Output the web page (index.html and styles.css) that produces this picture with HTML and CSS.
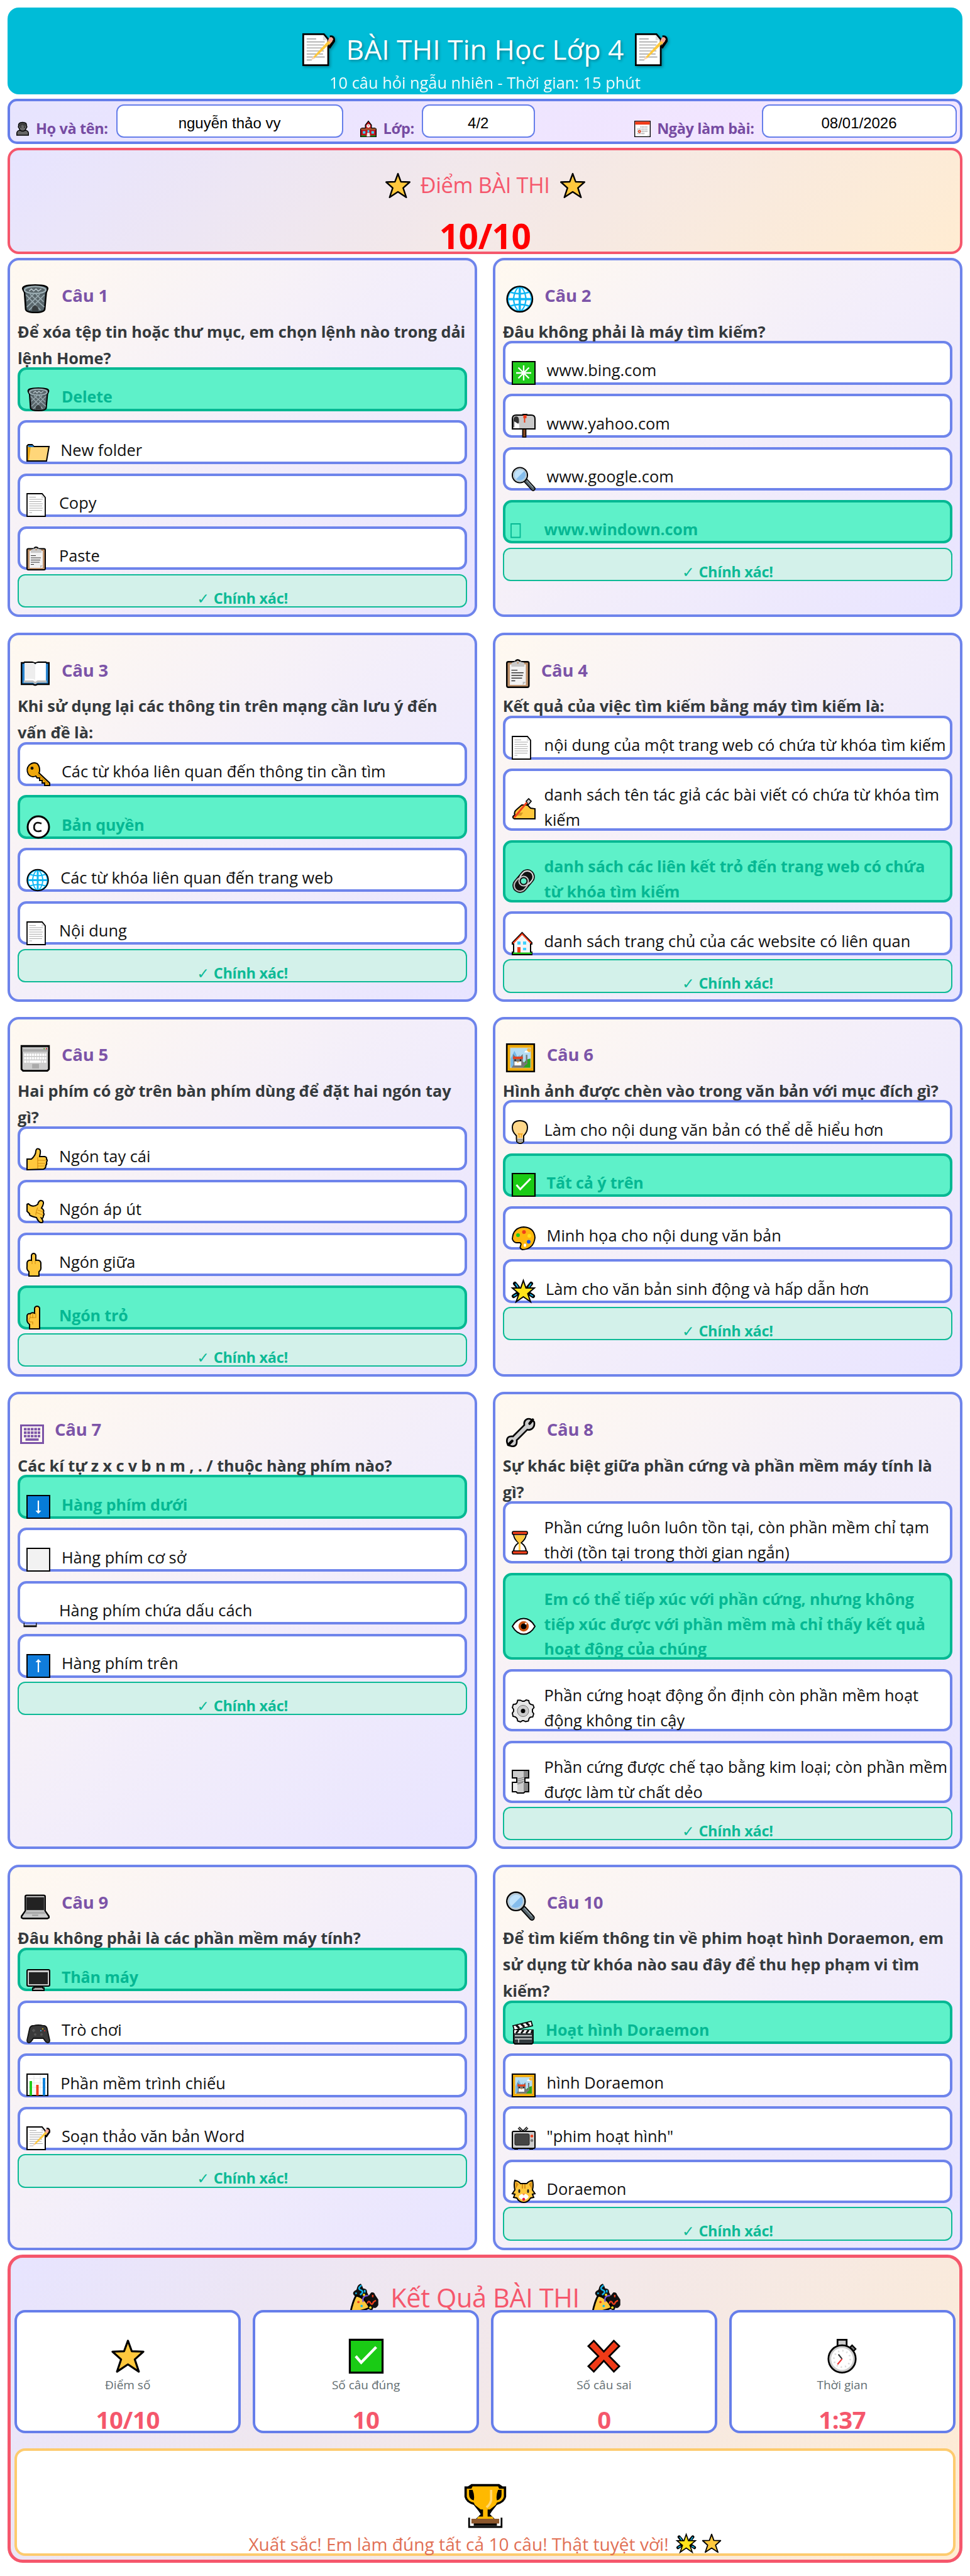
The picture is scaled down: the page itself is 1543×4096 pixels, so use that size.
FILE: index.html
```html
<!DOCTYPE html>
<html lang="vi">
<head>
<meta charset="utf-8">
<title>BÀI THI Tin Học Lớp 4</title>
<link rel="stylesheet" href="styles.css">
</head>
<body>
<svg class="defs" aria-hidden="true">
<symbol id="memo" viewBox="0 0 38 38"><path d="M1 1h24l5 6v30H1z" fill="#fff" stroke="#000" stroke-width="2"/><path d="M24 2v6h5z" fill="#ddd"/><path d="M5 6.500h11M5 10h21M5 13.500h20M5 17h21M5 20.500h20M5 24h19M5 27.500h21M5 31h6" stroke="#aaa" stroke-width="1.200"/><path d="M32 4q5-1 4.500 5L31 17" fill="#f3a694" stroke="#000" stroke-width="3"/><path d="M32 6.500 13 27l-3 4 5-3L35 9z" fill="#ffc83d"/><path d="M31.500 5q3-2 4.500 2l-2.500 4-4-2.500z" fill="#f3a694"/><path d="m10 31 2-4 3 2z" fill="#f6d6bd"/></symbol>
<symbol id="person" viewBox="0 0 38 38"><path d="M3 37V31q1-7 8-7h16q7 0 8 7v6z" fill="#666" stroke="#000" stroke-width="2.500"/><path d="M19 1.500C10 1.500 7 6 8 12q-2 3 1 5 2 9 10 9t10-9q3-2 1-5 1-10.500-11-10.500z" fill="#666" stroke="#000" stroke-width="2.500"/><path d="M9 13q2-11 11-11 9 1 10 10-9 0-12-4-3 5-9 5z" fill="#3b3b3b"/><path d="M14 13.500v3M24 13.500v3" stroke="#000" stroke-width="2"/></symbol>
<symbol id="school" viewBox="0 0 38 38"><path d="M1 37V19l3-2h8V10l7-9 7 9v7h8l3 2v18z" fill="#c3141c" stroke="#000" stroke-width="2"/><path d="M2 18h34v3H2z" fill="#986536"/><circle cx="19" cy="12" r="4" fill="#fff"/><path d="M19 10v3" stroke="#000"/><path d="M6 24h6v6H6zM26 24h6v6h-6zM17 22h4v5h-4z" fill="#3fd3ff"/><path d="M16 28h6l1 9h-8z" fill="#eee"/><path d="M2 34h12v3H2zM24 34h12v3H24z" fill="#128b16"/></symbol>
<symbol id="cal" viewBox="0 0 38 38"><path d="M1 1h36v36H1z" fill="#fff" stroke="#000" stroke-width="2"/><path d="M2 2h34v7H2z" fill="#f03a17"/><path d="M14 14.500h17M7 19.500h24M7 24.500h24M7 29.500h17" stroke="#bbb" stroke-width="3.500" stroke-dasharray="2.500 1"/><circle cx="12" cy="25" r="2.500" fill="none" stroke="#f03a17" stroke-width="2"/><path d="M31 36v-4h5z" fill="#ddd"/></symbol>
<symbol id="star" viewBox="0 0 38 38"><path d="m19 2 4.200 11.500L36 14 26.500 22.500 31 36l-12-8-12 8 4.500-13.500L2 14l12.800-.5z" fill="#ffc83d" stroke="#000" stroke-width="2.200" stroke-linejoin="round"/></symbol>
<symbol id="trash" viewBox="0 0 38 38"><path d="M3 7q-3-6 16-6t16 6l-1.500 4-2 22q-1 4-12.500 4T6.500 33L5 11z" fill="#47565c" stroke="#000" stroke-width="2"/><path d="M6 12q12 4 26 0l-2 21q-10 4-21 0z" fill="#59666b"/><path d="m7 14 19 20M12 13l19 17M20 13l10 10M31 14 11 34M25 13 8 30M17 13 8 22" stroke="#9aaab0" stroke-width="1.400"/><ellipse cx="19" cy="7.500" rx="14" ry="4.700" fill="#59666b" stroke="#9fb1b7" stroke-width="2"/><path d="m11 9 3-3 3 3 3-3 3 3 4-3" stroke="#b5c4ca" fill="none" stroke-width="1.300"/><path d="M15 30q4-5 8 0v5h-8z" fill="#222" opacity=".6"/></symbol>
<symbol id="folder" viewBox="0 0 38 38"><path d="M1 33V9l2-2h6l3 3h24l-4 23z" fill="#ffd679" stroke="#000" stroke-width="2"/><path d="M2 32V10h5L4 32z" fill="#e9a512"/><path d="M3 8h7l2 3H3z" fill="#1f75c4"/></symbol>
<symbol id="page" viewBox="0 0 38 38"><path d="M1 1h24l5 6v30H1z" fill="#fff" stroke="#000" stroke-width="1.800"/><path d="M24 2v6h5z" fill="#ddd"/><path d="M4.500 6.500H15M4.500 10H26M4.500 13.500H24M4.500 17H26M4.500 20.500H25M4.500 24H26M4.500 27.500H25M4.500 31H9" stroke="#aaa" stroke-width="1.200"/></symbol>
<symbol id="clip" viewBox="0 0 38 38"><rect x="1" y="3.500" width="29" height="33.500" rx="2" fill="#bd9069" stroke="#000" stroke-width="2"/><path d="M5 7h21v27H5z" fill="#f2f2f2"/><path d="M7 10V6q1-2 4-2 1-3 4.500-3T20 4q4 0 4 2v4z" fill="#c9c9c9"/><path d="M12 3q3-4 7 0" fill="none" stroke="#000" stroke-width="2"/><circle cx="15.500" cy="5" r="1.200" fill="#bd9069"/><path d="M7 14.500h8M7 18h16M7 21.500h15M7 25h14M7 28.500h5" stroke="#333" stroke-width="1.100"/><path d="M22 34v-4h4z" fill="#bbb"/></symbol>
<symbol id="globe" viewBox="0 0 38 38"><circle cx="18" cy="19.500" r="16.700" fill="#12b8f5" stroke="#000" stroke-width="2"/><path d="M3.500 18Q5 8 14 5q-4 5-5 13zM3.500 21h5.500q1 8 5 13-9-3-10.500-13zM32.500 18Q31 8 22 5q4 5 5 13zM32.500 21H27q-1 8-5 13 9-3 10.500-13zM11 18Q12 9 16.500 5v13zM25 18q-1-9-5.500-13v13zM11 21q1 9 5.500 13V21zM25 21q-1 9-5.500 13V21z" fill="#fff"/><path d="M6 10.500q12 4 24 0M6 28.500q12-4 24 0" stroke="#12b8f5" stroke-width="2.200" fill="none"/></symbol>
<symbol id="aster" viewBox="0 0 38 38"><path d="M1 1h36v36H1z" fill="#22cb1c" stroke="#000" stroke-width="2"/><path d="M19 7v24M7 19h24M10.500 10.500l17 17M27.500 10.500l-17 17" stroke="#fff" stroke-width="2.300"/></symbol>
<symbol id="mail" viewBox="0 0 38 38"><path d="M17.500 22h5v15h-5z" fill="#8a4b22" stroke="#000" stroke-width="1.700"/><path d="M1 24V8q0-6 6-6h24q6 0 6 6v16z" fill="#c9c9c9" stroke="#000" stroke-width="2"/><path d="M2.500 22V9q1-5 5-5t4 7v3z" fill="#333"/><path d="m4 12 8 5v6H4z" fill="#fff"/><path d="M17 1h8" stroke="#000" stroke-width="2"/><path d="M18.500 2h5v5h-2v7h-2V7h-1z" fill="#f03a17"/></symbol>
<symbol id="mag" viewBox="0 0 38 38"><path d="m23 23 11 12" stroke="#000" stroke-width="7.500" stroke-linecap="round"/><path d="m23 23 11 12" stroke="#546269" stroke-width="4.500" stroke-linecap="round"/><path d="m24 22 10 11" stroke="#93a3aa" stroke-width="1.300"/><circle cx="13" cy="13.500" r="12" fill="#a9d3f5" stroke="#000" stroke-width="2"/><circle cx="13" cy="13.500" r="10" fill="#a9d3f5" stroke="#bcc6ca" stroke-width="1.800"/><path d="M20 7 7 20q-4-5-1-11 6-7 14-2z" fill="#c1e3fb"/><path d="M20 7q4 6 0 11-6 6-13 2z" fill="#85bdec"/></symbol>
<symbol id="tofu" viewBox="0 0 38 38"><path d="M-1 6h14.500v21.500H-1z" fill="none" stroke="#05b893" stroke-width="1.800"/></symbol>
<symbol id="book" viewBox="0 0 38 38"><path d="M1 5h3l1-1h10l4 1.500L23 4h10l1 1h3v28H22q-3 2-6 0H1z" fill="#2a86d1" stroke="#000" stroke-width="2"/><path d="M5 5h10q3 0 4 2 1-2 4-2h10v25H22l-3 2-3-2H5z" fill="#fff"/><path d="M5 5h9q5 0 5 4v19q-1-2-5-2H5z" fill="#eee"/><path d="M4 28h12l3 2 3-2h12v3H22l-3 2-3-2H4z" fill="#bbb"/></symbol>
<symbol id="key" viewBox="0 0 38 38"><path d="M21 12q0 4-1 5l17 16v4h-8v-4h-4v-4h-4v-4h-4l-2-3q-7 3-12-3-4-8 1-14 6-6 13-3 4 4 4 10z" fill="#efa80d" stroke="#000" stroke-width="1.900"/><circle cx="9" cy="9.500" r="2.400" fill="#111"/><path d="m18 19 17 16" stroke="#c28100" stroke-width="1.300"/></symbol>
<symbol id="copyr" viewBox="0 0 38 38"><circle cx="19" cy="19" r="17" fill="#fff" stroke="#000" stroke-width="3"/><path d="M24 13.500q-9-4-11.500 3-1.500 7 3.500 9 4 1 8-.8" fill="none" stroke="#111" stroke-width="2.800"/></symbol>
<symbol id="write" viewBox="0 0 38 38"><path d="m8 18 8-7h9l5 5 7 1v16H4q-5-3 1-6-2-5 3-9z" fill="#ffc83d" stroke="#000" stroke-width="2"/><path d="M8 23h10l-3 5H8z" fill="#d89a22"/><path d="m23 5 4-4 4 4-5 6z" fill="#ccc" stroke="#000" stroke-width="1.700"/><path d="M24 7 4 31" stroke="#f0401c" stroke-width="3"/></symbol>
<symbol id="link" viewBox="0 0 38 38"><g transform="rotate(40 19 19)"><rect x="7" y="-2" width="24" height="42" rx="12" fill="#111"/><rect x="9.700" y=".7" width="18.600" height="23" rx="9.300" fill="none" stroke="#ddd" stroke-width="2.200"/><rect x="9.700" y="14.300" width="18.600" height="23" rx="9.300" fill="none" stroke="#bbb" stroke-width="2.200"/><circle cx="19" cy="19" r="7.500" fill="#111" stroke="#ccc" stroke-width="2"/><circle cx="19" cy="19" r="4.500" fill="#5ef1c9"/></g></symbol>
<symbol id="house" viewBox="0 0 38 38"><path d="M1 18 16.500 2 32 18v2h-2v13h2v4H1v-4h2V20H1z" fill="#f4f4f4" stroke="#000" stroke-width="2"/><path d="M2 19 16.500 4 31 19" stroke="#f03a17" stroke-width="2.200" fill="none"/><path d="M9 16h5v5H9zM18 16h5v5h-5zM18 26h5v4h-5z" fill="#3fd3ff"/><path d="M9 25h5v10H9z" fill="#f03a17"/><path d="M2 33.500h30V36H2z" fill="#20c31a"/></symbol>
<symbol id="kbd" viewBox="0 0 38 38"><path d="M1 3.500h36V34l-2 2H3l-2-2z" fill="#ccc" stroke="#000" stroke-width="2.400"/><path d="M2 5h34v6H2z" fill="#aaa"/><path d="M3 7h32" stroke="#ddd"/><path d="M4.500 15h29M4.500 19.500h29" stroke="#fff" stroke-width="3" stroke-dasharray="2.600 .8"/><path d="M4.500 24h3m1 0h2m1 0h15m1 0h2m1 0h3" stroke="#fff" stroke-width="3"/><path d="M15 27h9v6h-9z" fill="#aaa"/><path d="M33 7h1.500" stroke="#d22" stroke-width="1.500"/><path d="M30 7h1.500" stroke="#5a2" stroke-width="1.500"/></symbol>
<symbol id="thumb" viewBox="0 0 38 38"><path d="M1 37V20h7q7-6 7-13 1-5 5-3 3 1 2 7l-1 5h8q4 1 3 4 2 2 0 5 1 3-1 5 0 5-4 6z" fill="#ffc83d" stroke="#000" stroke-width="2"/><path d="M18 17v18M18 22h13M18 27h12M18 31h11" stroke="#d48e10" stroke-width="1.200"/></symbol>
<symbol id="callme" viewBox="0 0 38 38"><path d="m1 8 2-1q7 7 15 1 2-7 6-6 5 1 2 8l-2 4q5 3 3 7 2 3 0 5 0 5-3 4 5 7-1 7-4-1-7-8Q3 26 5 23l-4-4z" fill="#ffc83d" stroke="#000" stroke-width="2"/><path d="M18 13q-3 7-3 12M18 17l9 3M16 21l10 4" stroke="#d48e10" stroke-width="1.200" fill="none"/></symbol>
<symbol id="middle" viewBox="0 0 38 38"><path d="M4 37v-7q-4-3-3-8v-6q1-5 7-4V4q1-3 3.500-3T15 4v8q7-1 8 4v6q1 5-3 8v7z" fill="#ffc83d" stroke="#000" stroke-width="2"/><path d="M9 13v5M14 13v5" stroke="#d48e10"/></symbol>
<symbol id="point" viewBox="0 0 38 38"><path d="M5 37v-7q-5-4-4-9v-5q1-4 5-3 3-3 7-1V4q1-3 4-3t4 3v33z" fill="#ffc83d" stroke="#000" stroke-width="2"/><path d="M6 14v6M10 13v7M15 12v7H6q-4 4 0 7h4v4" fill="none" stroke="#d48e10" stroke-width="1.200"/></symbol>
<symbol id="frame" viewBox="0 0 38 38"><path d="M1 1h36v36H1z" fill="#ffb900" stroke="#000" stroke-width="2.200"/><path d="M4 4h30v30H4z" fill="#f3b62b" stroke="#e29b08"/><path d="M5.500 6h27v26h-27z" fill="#b4dcf3"/><path d="m6 20 5-10 4 8 3-3v16H6z" fill="#75b8e8"/><path d="M22 32q1-11 10-12v12z" fill="#2ca51e"/><circle cx="30" cy="9" r="2.500" fill="#f6b73c"/><path d="M24 12q2-5 5-1l2 1z" fill="#fff"/><path d="m9 14 4 4h5l4-4v10l4 2V15h2v12q-3 1-5 5H7l3-4z" fill="#777"/><path d="M9 17.500h13v3H9z" fill="#e6411d"/><path d="M11 24h9v5h-9z" fill="#fff"/><circle cx="12" cy="22" r="1" fill="#111"/><circle cx="19" cy="22" r="1" fill="#111"/><path d="M14 24h3l-1.500 2z" fill="#f9c15a"/></symbol>
<symbol id="bulb" viewBox="0 0 38 38"><path d="M7.500 30V25Q1 19 1 12 1 1 13 1t12 11q0 7-6 13v9q-2 3-5.500 3T8 34z" fill="#ffd88a" stroke="#000" stroke-width="1.900"/><path d="M12 28q0-5-2-7 4 3 3 0 1 3 4 0-2 3-2 7" fill="none" stroke="#f6a51b" stroke-width="1.500"/><path d="M9 29h9v6H9z" fill="#ccc"/><path d="M9 31h9M9 33.500h9" stroke="#666"/></symbol>
<symbol id="check" viewBox="0 0 38 38"><path d="M1 1h36v36H1z" fill="#1acb15" stroke="#000" stroke-width="2.200"/><path d="m7.500 19 6 7L30 9" fill="none" stroke="#fff" stroke-width="3"/></symbol>
<symbol id="palette" viewBox="0 0 38 38"><path d="M19 1Q2 2 1 20q2 6 7 6h5q3 1 1 5-2 4 3 6Q35 36 37 18 36 2 19 1z" fill="#ffb70f" stroke="#000" stroke-width="1.900"/><circle cx="10" cy="14" r="3" fill="#22cb1c"/><circle cx="19.500" cy="9" r="3" fill="#f0401c"/><circle cx="28" cy="15" r="3" fill="#ffe11b"/><circle cx="27" cy="24.500" r="3" fill="#1354ef"/><ellipse cx="21" cy="30" rx="2" ry="2.700" fill="#fff"/></symbol>
<symbol id="glow" viewBox="0 0 38 38"><path d="m5 7 5 6M31 7l-5 6M3 27l6-4M34 27l-6-4" stroke="#000" stroke-width="6" stroke-linecap="round"/><path d="m18.500 2 4.200 12H36l-10.500 9L30 36l-11.500-8L7 36l4.500-13L1 14h13.300z" fill="#ffe31a" stroke="#000" stroke-width="2"/><path d="m6 7 4 6M31 7l-4 6M3 27l5-3M34 27l-5-3" stroke="#15b5e9" stroke-width="2"/></symbol>
<symbol id="kglyph" viewBox="0 0 38 31"><path d="M1.500 1.500h35v28h-35z" fill="none" stroke="#7c54a8" stroke-width="3"/><path d="M6 7.500h26M6 13h26M6 18.500h26" stroke="#7c54a8" stroke-width="4.200" stroke-dasharray="4.300 1.200"/><path d="M8.500 24h21" stroke="#7c54a8" stroke-width="3.700"/></symbol>
<symbol id="down" viewBox="0 0 38 38"><path d="M1 1h36v36H1z" fill="#067cd8" stroke="#000" stroke-width="2"/><path d="M19 9v16" stroke="#fff" stroke-width="2.200"/><path d="M14.500 25h9L19 30z" fill="#fff"/></symbol>
<symbol id="up" viewBox="0 0 38 38"><path d="M1 1h36v36H1z" fill="#107cdb" stroke="#000" stroke-width="2"/><path d="M19 12v17" stroke="#fff" stroke-width="2.200"/><path d="M14.500 13h9L19 8z" fill="#fff"/></symbol>
<symbol id="square" viewBox="0 0 38 38"><path d="M1 1h36v36H1z" fill="#f2f2f2" stroke="#000" stroke-width="1.900"/></symbol>
<symbol id="space" viewBox="0 0 38 38"><path d="M-3.700 34.500v6h19.400v-6" fill="none" stroke="#111" stroke-width="1.400"/><path d="M-4.300 39.500h20.600" stroke="#111" stroke-width="2.400"/></symbol>
<symbol id="wrench" viewBox="0 0 38 38"><path d="M37 5q1 6-3 9-3 2-6 1L14 29q1 8-6 8-7-1-7-7 0-7 8-6L24 9q-1-6 4-8 5-1 9 4z" fill="#ccc" stroke="#000" stroke-width="2.200"/><path d="m35 2-4 5M3 35l5-5" stroke="#000" stroke-width="3.500" stroke-linecap="round"/></symbol>
<symbol id="hour" viewBox="0 0 38 38"><path d="M3 5q0 8 8 14-8 6-8 14h20q0-8-8-14 8-6 8-14z" fill="#fff" stroke="#000" stroke-width="2"/><path d="M5 7h16q0 6-7 12v14h-3V19q-6-6-6-12z" fill="#ffc83d"/><rect x="1" y="1" width="24" height="5" rx="2" fill="#f0401c" stroke="#000" stroke-width="1.700"/><rect x="1" y="32" width="24" height="5" rx="2" fill="#f0401c" stroke="#000" stroke-width="1.700"/></symbol>
<symbol id="eye" viewBox="0 0 38 38"><path d="M1 19Q8 6.500 19 6.500T37 19Q30 31.500 19 31.500T1 19z" fill="#fff" stroke="#000" stroke-width="2"/><circle cx="19" cy="19" r="8.200" fill="#c7530f"/><circle cx="19" cy="19" r="4.500" fill="#000"/><circle cx="22.500" cy="14.500" r="1.600" fill="#fff"/></symbol>
<symbol id="gear" viewBox="0 0 38 38"><path d="M14 2.500 17 4h3l3-2 4 1 1 4 2 2 4 1 1.500 4L33 17v4l2 3-1.500 5-4 .5-2 2-1 4-4.500 1L19 35h-2l-3 2-4.500-1.500-1-4L6 29l-4-1-1-5 2-3v-3l-2-3 1.500-5 4-.5 2-2 1-4z" fill="#e8e8e8" stroke="#000" stroke-width="1.900"/><circle cx="18" cy="19.500" r="9" fill="#ccc" stroke="#777"/><circle cx="18" cy="19.500" r="3.500" fill="#000"/></symbol>
<symbol id="bolt" viewBox="0 0 38 38"><path d="M1 1h26v12h-6v7h6v15h-6l-2 2H9l-2-2H1V20h7v-7H1z" fill="#ccc" stroke="#000" stroke-width="1.900"/><path d="M19 2h7v10h-7zM19 21h7v13h-7z" fill="#888"/><path d="M2 21h7v13H2z" fill="#eee"/><path d="m9 15 11-3M9 18l11-3M9 21l11-3M9 23l9-3" stroke="#777" stroke-width="1.200"/></symbol>
<symbol id="laptop" viewBox="0 0 38 38"><path d="M6 7q0-1.500 2-1.500h22q2 0 2 1.500v19l5 7v2l-2 1H3l-2-1v-2l5-7z" fill="#ccc" stroke="#000" stroke-width="2"/><path d="M7.500 8h23v17h-23z" fill="#222"/><path d="M6 27h26v3H6z" fill="#aaa"/><path d="M15 31h8v1.500h-8z" fill="#999"/></symbol>
<symbol id="desktop" viewBox="0 0 38 38"><path d="M12 27h14v5h2v4H10v-4h2z" fill="#aaa" stroke="#000" stroke-width="1.900"/><rect x="1" y="3" width="36" height="26" rx="2" fill="#ccc" stroke="#000" stroke-width="2"/><path d="M4 7h30v19H4z" fill="#222"/><path d="M13 30h12v2H13z" fill="#222"/></symbol>
<symbol id="pad" viewBox="0 0 38 38"><path d="M11 8q8-2 16 0 5 0 6 5l4 18q0 4-3 4-3 0-7-7H11q-4 7-7 7-3 0-3-4L5 13q1-5 6-5z" fill="#3a3a3a" stroke="#111" stroke-width="1.800"/><path d="M9 15.500h5M11.500 13v5" stroke="#555" stroke-width="2"/><circle cx="14" cy="22" r="2" fill="#555"/><circle cx="24" cy="22" r="2" fill="#555"/><circle cx="26" cy="13" r="1" fill="#e8c51a"/><circle cx="29" cy="16" r="1" fill="#e33"/><circle cx="23" cy="16" r="1" fill="#5bf"/></symbol>
<symbol id="chart" viewBox="0 0 38 38"><path d="M1 1h33v34H1z" fill="#fff" stroke="#000" stroke-width="2"/><path d="M2 8h31M2 15h31M2 22h31M12 2v32M22 2v32" stroke="#e5e5e5"/><path d="M5 12h4v23H5z" fill="#22cb1c"/><path d="M15.500 18h4v17h-4z" fill="#f0401c"/><path d="M26 7h4v28h-4z" fill="#1082dc"/></symbol>
<symbol id="clap" viewBox="0 0 38 38"><path d="M2 8 31 1l2 7L4 15z" fill="#fff" stroke="#000" stroke-width="1.800"/><path d="m7 7 5 5M15 5l5 5M23 3l5 5" stroke="#111" stroke-width="3.500"/><path d="M3 15h31v20l-2 2H5l-2-2z" fill="#333b3e" stroke="#000" stroke-width="1.800"/><path d="M4 15h29v5H4z" fill="#fff"/><path d="m11 15-4 5M19 15l-4 5M27 15l-4 5M33 15l-2 5" stroke="#111" stroke-width="3"/><path d="M5 24h27M5 29h27M11 29v6" stroke="#eee" stroke-width="1.300"/></symbol>
<symbol id="tv" viewBox="0 0 38 38"><path d="m11 2 7 7 7-7" stroke="#000" stroke-width="4" fill="none"/><path d="m11 2 7 7 7-7" stroke="#aaa" stroke-width="1.500" fill="none"/><path d="M4 34h6v3H4zM28 34h6v3h-6z" fill="#000"/><rect x="1" y="8" width="36" height="27" rx="2" fill="#ccc" stroke="#000" stroke-width="2"/><rect x="5" y="12" width="23" height="18" rx="2" fill="#444" stroke="#222"/><circle cx="32" cy="15.500" r="2.300" fill="#f0401c"/><circle cx="32" cy="22.500" r="2.300" fill="#777"/></symbol>
<symbol id="cat" viewBox="0 0 38 38"><path d="M5 2q6 1 9 5h10q3-4 9-5 2 7 0 15l4 6-4 1 2 5-5 1q-4 7-11 7T8 30l-5-1 2-5-4-1 4-6Q3 9 5 2z" fill="#ffc83d" stroke="#000" stroke-width="2"/><path d="m6 4 5 4-5 8zM32 4l-5 4 5 8zM16 8h2v7h-2zM20 8h2v7h-2z" fill="#d89017"/><path d="M13 25q6-4 12 0l2 3q-2 5-8 4-6 1-8-4z" fill="#fff"/><ellipse cx="12" cy="19" rx="1.500" ry="3" fill="#222"/><ellipse cx="26" cy="19" rx="1.500" ry="3" fill="#222"/><path d="M16.500 23h5L19 26z" fill="#f7894a"/><ellipse cx="19" cy="32" rx="2.200" ry="2.500" fill="#e8133c"/></symbol>
<symbol id="party" viewBox="0 0 38 38"><path d="M15 1q2 2 3 6 5 0 5 5l2 4 3-4q4-1 5 3l4 6v7q-3 5-6 3l-2 4-4-2-10-14-7-2q-5-4-1-7 3-1 3-3 1-5 5-6z" fill="#111"/><path d="M2 37q3-14 7-21 11 2 17 15-6 4-24 6z" fill="#ffc83d" stroke="#000" stroke-width="2.200"/><path d="M16 3q-6 4-1 6t-1 6M20 9v3M9 12v2" stroke="#15b5e9" stroke-width="2" fill="none"/><path d="M18 24q-2-8 6-8" stroke="#7b54d9" stroke-width="1.800" fill="none"/><path d="M23 26q2-5 4-1t4-1l3-2M30 15v3" stroke="#f0401c" stroke-width="1.900" fill="none"/><circle cx="12" cy="24" r="1.500" fill="#f0401c"/><circle cx="16" cy="29" r="1.500" fill="#15b5e9"/><circle cx="19" cy="15" r="1.500" fill="#ffe31a"/><circle cx="27" cy="31" r="1.500" fill="#ffe31a"/></symbol>
<symbol id="cross" viewBox="0 0 38 38"><path d="m8 2 11 12L30 2l6 6-11 11 11 11-6 6-11-12L8 36l-6-6 11-11L2 8z" fill="#f03a17" stroke="#000" stroke-width="1.900"/></symbol>
<symbol id="watch" viewBox="0 0 38 38"><path d="m30 7 4 4-3 3-4-4z" fill="#777" stroke="#000" stroke-width="1.500"/><path d="M14 1h10v8H14z" fill="#ccc" stroke="#000" stroke-width="1.900"/><circle cx="19" cy="22" r="15" fill="#ccc" stroke="#000" stroke-width="1.900"/><circle cx="19" cy="22" r="12" fill="#fff"/><circle cx="19" cy="22" r="9" fill="none" stroke="#ddd" stroke-width="2" stroke-dasharray="1.500 3.200"/><path d="m15 17 4 5" stroke="#333" stroke-width="1.500"/><path d="m19 22-5 6" stroke="#e33" stroke-width="1.500"/></symbol>
<symbol id="trophy" viewBox="0 0 38 38"><path d="M7 1h24l3 2h3v9q-1 5-8 7l-4 5-2 3 4 4h2v6H9v-6h2l4-4-2-3-4-5q-7-2-8-7V3h3z" fill="#000"/><path d="M8 3h22l1 2h4v7q-1 4-6 5l-1 2-5 4h-2v6h4l2 3v1H11v-1l2-3h4v-6h-2l-5-4-1-2q-5-1-6-5V5h4z" fill="#ffb900"/><path d="M5 6h3q2 5 1 9-4-1-4-5zM33 6h-3q-2 5-1 9 4-1 4-5z" fill="#000"/><path d="M24 6v9q-1 4-4 6" stroke="#ffd873" stroke-width="2" fill="none"/><path d="M7 31h24v4H7z" fill="#8b572d"/><path d="M5 30v8h28v-8" fill="none" stroke="#000" stroke-width="1.500"/></symbol>
</svg>

<main class="page">
<header class="hero">
<h1><svg><use href="#memo"/></svg><span>BÀI THI Tin Học Lớp 4</span><svg><use href="#memo"/></svg></h1>
<p>10 câu hỏi ngẫu nhiên - Thời gian: 15 phút</p>
</header>

<section class="info">
<div class="field"><svg><use href="#person"/></svg><label>Họ và tên:</label><div class="input name">nguyễn thảo vy</div></div>
<div class="field cls"><svg><use href="#school"/></svg><label>Lớp:</label><div class="input grade">4/2</div></div>
<div class="field date"><svg><use href="#cal"/></svg><label>Ngày làm bài:</label><div class="input day">08/01/2026</div></div>
</section>

<section class="score">
<h2><svg><use href="#star"/></svg><span>Điểm BÀI THI</span><svg><use href="#star"/></svg></h2>
<div class="points">10/10</div>
</section>

<section class="quiz">
<article class="card">
<header><svg><use href="#trash"/></svg><h3>Câu 1</h3></header>
<p class="q">Để xóa tệp tin hoặc thư mục, em chọn lệnh nào trong dải<br>lệnh Home?</p>
<div class="opt ok wide"><svg><use href="#trash"/></svg><span>Delete</span></div>
<div class="opt mid"><svg><use href="#folder"/></svg><span>New folder</span></div>
<div class="opt"><svg><use href="#page"/></svg><span>Copy</span></div>
<div class="opt"><svg><use href="#clip"/></svg><span>Paste</span></div>
<div class="fb"><i>✓</i>Chính xác!</div>
</article>

<article class="card">
<header class="h2"><svg><use href="#globe"/></svg><h3>Câu 2</h3></header>
<p class="q">Đâu không phải là máy tìm kiếm?</p>
<div class="opt wide"><svg><use href="#aster"/></svg><span>www.bing.com</span></div>
<div class="opt wide"><svg><use href="#mail"/></svg><span>www.yahoo.com</span></div>
<div class="opt wide"><svg><use href="#mag"/></svg><span>www.google.com</span></div>
<div class="opt ok"><svg><use href="#tofu"/></svg><span>www.windown.com</span></div>
<div class="fb"><i>✓</i>Chính xác!</div>
</article>

<article class="card">
<header><svg><use href="#book"/></svg><h3>Câu 3</h3></header>
<p class="q">Khi sử dụng lại các thông tin trên mạng cần lưu ý đến<br>vấn đề là:</p>
<div class="opt wide"><svg><use href="#key"/></svg><span>Các từ khóa liên quan đến thông tin cần tìm</span></div>
<div class="opt ok wide"><svg><use href="#copyr"/></svg><span>Bản quyền</span></div>
<div class="opt mid"><svg><use href="#globe"/></svg><span>Các từ khóa liên quan đến trang web</span></div>
<div class="opt"><svg><use href="#page"/></svg><span>Nội dung</span></div>
<div class="fb"><i>✓</i>Chính xác!</div>
</article>

<article class="card">
<header class="h4"><svg><use href="#clip"/></svg><h3>Câu 4</h3></header>
<p class="q">Kết quả của việc tìm kiếm bằng máy tìm kiếm là:</p>
<div class="opt"><svg><use href="#page"/></svg><span>nội dung của một trang web có chứa từ khóa tìm kiếm</span></div>
<div class="opt"><svg><use href="#write"/></svg><span>danh sách tên tác giả các bài viết có chứa từ khóa tìm<br>kiếm</span></div>
<div class="opt ok"><svg><use href="#link"/></svg><span>danh sách các liên kết trỏ đến trang web có chứa<br>từ khóa tìm kiếm</span></div>
<div class="opt"><svg><use href="#house"/></svg><span>danh sách trang chủ của các website có liên quan</span></div>
<div class="fb"><i>✓</i>Chính xác!</div>
</article>

<article class="card">
<header><svg><use href="#kbd"/></svg><h3>Câu 5</h3></header>
<p class="q">Hai phím có gờ trên bàn phím dùng để đặt hai ngón tay<br>gì?</p>
<div class="opt"><svg><use href="#thumb"/></svg><span>Ngón tay cái</span></div>
<div class="opt"><svg><use href="#callme"/></svg><span>Ngón áp út</span></div>
<div class="opt"><svg><use href="#middle"/></svg><span>Ngón giữa</span></div>
<div class="opt ok"><svg><use href="#point"/></svg><span>Ngón trỏ</span></div>
<div class="fb"><i>✓</i>Chính xác!</div>
</article>

<article class="card">
<header><svg><use href="#frame"/></svg><h3>Câu 6</h3></header>
<p class="q">Hình ảnh được chèn vào trong văn bản với mục đích gì?</p>
<div class="opt"><svg><use href="#bulb"/></svg><span>Làm cho nội dung văn bản có thể dễ hiểu hơn</span></div>
<div class="opt ok wide"><svg><use href="#check"/></svg><span>Tất cả ý trên</span></div>
<div class="opt wide"><svg><use href="#palette"/></svg><span>Minh họa cho nội dung văn bản</span></div>
<div class="opt mid"><svg><use href="#glow"/></svg><span>Làm cho văn bản sinh động và hấp dẫn hơn</span></div>
<div class="fb"><i>✓</i>Chính xác!</div>
</article>

<article class="card">
<header class="h7"><svg><use href="#kglyph"/></svg><h3>Câu 7</h3></header>
<p class="q">Các kí tự z x c v b n m , . / thuộc hàng phím nào?</p>
<div class="opt ok wide"><svg><use href="#down"/></svg><span>Hàng phím dưới</span></div>
<div class="opt wide"><svg><use href="#square"/></svg><span>Hàng phím cơ sở</span></div>
<div class="opt"><svg><use href="#space"/></svg><span>Hàng phím chứa dấu cách</span></div>
<div class="opt wide"><svg><use href="#up"/></svg><span>Hàng phím trên</span></div>
<div class="fb"><i>✓</i>Chính xác!</div>
</article>

<article class="card">
<header><svg><use href="#wrench"/></svg><h3>Câu 8</h3></header>
<p class="q">Sự khác biệt giữa phần cứng và phần mềm máy tính là<br>gì?</p>
<div class="opt"><svg><use href="#hour"/></svg><span>Phần cứng luôn luôn tồn tại, còn phần mềm chỉ tạm<br>thời (tồn tại trong thời gian ngắn)</span></div>
<div class="opt ok"><svg><use href="#eye"/></svg><span>Em có thể tiếp xúc với phần cứng, nhưng không<br>tiếp xúc được với phần mềm mà chỉ thấy kết quả<br>hoạt động của chúng</span></div>
<div class="opt"><svg><use href="#gear"/></svg><span>Phần cứng hoạt động ổn định còn phần mềm hoạt<br>động không tin cậy</span></div>
<div class="opt"><svg><use href="#bolt"/></svg><span>Phần cứng được chế tạo bằng kim loại; còn phần mềm<br>được làm từ chất dẻo</span></div>
<div class="fb"><i>✓</i>Chính xác!</div>
</article>

<article class="card">
<header><svg><use href="#laptop"/></svg><h3>Câu 9</h3></header>
<p class="q">Đâu không phải là các phần mềm máy tính?</p>
<div class="opt ok wide"><svg><use href="#desktop"/></svg><span>Thân máy</span></div>
<div class="opt wide"><svg><use href="#pad"/></svg><span>Trò chơi</span></div>
<div class="opt mid"><svg><use href="#chart"/></svg><span>Phần mềm trình chiếu</span></div>
<div class="opt wide"><svg><use href="#memo"/></svg><span>Soạn thảo văn bản Word</span></div>
<div class="fb"><i>✓</i>Chính xác!</div>
</article>

<article class="card">
<header><svg><use href="#mag"/></svg><h3>Câu 10</h3></header>
<p class="q">Để tìm kiếm thông tin về phim hoạt hình Doraemon, em<br>sử dụng từ khóa nào sau đây để thu hẹp phạm vi tìm<br>kiếm?</p>
<div class="opt ok mid"><svg><use href="#clap"/></svg><span>Hoạt hình Doraemon</span></div>
<div class="opt wide"><svg><use href="#frame"/></svg><span>hình Doraemon</span></div>
<div class="opt wide"><svg><use href="#tv"/></svg><span>"phim hoạt hình"</span></div>
<div class="opt wide"><svg><use href="#cat"/></svg><span>Doraemon</span></div>
<div class="fb"><i>✓</i>Chính xác!</div>
</article>
</section>

<section class="result">
<h2><svg><use href="#party"/></svg><span>Kết Quả BÀI THI</span><svg><use href="#party"/></svg></h2>
<div class="stats">
<div class="stat"><svg><use href="#star"/></svg><small>Điểm số</small><b>10/10</b></div>
<div class="stat"><svg><use href="#check"/></svg><small>Số câu đúng</small><b>10</b></div>
<div class="stat"><svg><use href="#cross"/></svg><small>Số câu sai</small><b>0</b></div>
<div class="stat"><svg><use href="#watch"/></svg><small>Thời gian</small><b>1:37</b></div>
</div>
<div class="message">
<svg class="cup"><use href="#trophy"/></svg>
<p><span>Xuất sắc! Em làm đúng tất cả 10 câu! Thật tuyệt vời!</span><svg><use href="#glow"/></svg><svg><use href="#star"/></svg></p>
</div>
</section>
</main>
</body>
</html>
```
FILE: styles.css
```css
* { box-sizing: border-box; margin: 0; }
body { background: #fff; font-family: "Open Sans", "Noto Sans", sans-serif; color: #111; white-space: nowrap; }
svg { display: block; flex: none; overflow: visible; }
symbol { overflow: visible; }
.defs { width: 0; height: 0; position: absolute; }
.page { height: 4096px; padding: 12px 12px 0; }

.hero { height: 138.3px; border-radius: 18px; background: #00bcd7; color: #fff; padding-top: 41px; }
.hero h1 { display: flex; justify-content: center; gap: 18px; height: 60px; font-size: 44.3px; font-weight: 400; line-height: 50px; text-shadow: 2px 2px 4px rgba(0,0,0,.3); }
.hero h1 svg { width: 52px; height: 52px; filter: drop-shadow(2px 2px 2px rgba(0,0,0,.3)); }
.hero p { text-align: center; font-size: 25.4px; line-height: 36px; opacity: .95; }

.info { margin-top: 6.6px; height: 72.1px; border: 4px solid #667eea; border-radius: 15px; background: linear-gradient(135deg, #e7e4fe, #f5e6ff); display: flex; padding: 5.5px 5.5px 0 9px; }
.field { display: flex; align-items: flex-start; }
.field svg { width: 26px; height: 26px; margin: 26px 6px 0 0; }
.field:first-child svg { width: 22px; height: 27px; margin: 25px 10px 0 0; }
.field label { font-size: 23.5px; font-weight: 700; color: #764ba2; line-height: 34px; margin-top: 21px; letter-spacing: -.4px; }
.input { height: 52.7px; border: 2px solid #667eea; border-radius: 12px; background: #fff; color: #000; text-align: center; font-family: "Liberation Sans", Arial, sans-serif; font-size: 24px; line-height: 56px; }
.input.name { width: 361px; margin-left: 13px; }
.cls { margin-left: 27px; }
.cls label { margin-left: 5px; }
.input.grade { width: 180px; margin-left: 12px; }
.date { margin-left: auto; }
.date label { margin-left: 4px; }
.input.day { width: 310px; margin-left: 12px; }

.score { margin-top: 6px; height: 168.9px; border: 4px solid #f5576c; border-radius: 18px; background: linear-gradient(135deg, #e7e4ff, #ffecd2); padding-top: 35.5px; }
.score h2 { display: flex; justify-content: center; gap: 15px; height: 44px; font-size: 34.5px; font-weight: 400; line-height: 39px; color: #f5576c; letter-spacing: -.4px; }
.score h2 svg { width: 42px; height: 42px; }
.points { text-align: center; font-size: 55px; font-weight: 700; line-height: 64px; margin-top: 25px; color: #f00; letter-spacing: -.6px; }

.quiz { margin-top: 5.9px; display: grid; grid-template-columns: 1fr 1fr; gap: 24.4px; grid-template-rows: 571.5px 587px 571.5px 727.2px 613.6px; }
.card { border: 4px solid #6e84eb; border-radius: 18px; background: linear-gradient(135deg, #fff9f0 0%, #f3eefa 50%, #e8e4ff 100%); padding: 38.3px 12px 0; }
.card header { display: flex; align-items: flex-start; height: 47.9px; }
.card header svg { width: 46px; height: 46px; margin-left: 5px; }
.card h3 { font-size: 27.5px; font-weight: 700; line-height: 36px; margin-left: 19px; color: #7c54a8; letter-spacing: -.2px; }
.card .h2 h3 { margin-left: 15.5px; }
.card .h4 h3 { margin-left: 10px; }
.card .h7 svg { width: 38px; height: 31px; margin: 10px 0 0 4px; }
.card .h7 h3 { margin-left: 17px; }
.q { position: relative; z-index: 1; font-size: 25.3px; font-weight: 700; line-height: 42px; padding-top: 5.6px; margin-bottom: -5.6px; color: #34393c; letter-spacing: -.1px; }
.opt { display: flex; align-items: center; min-height: 69.7px; border: 4px solid #6e84eb; border-radius: 14px; background: #fff; padding: 5.8px 0 5.8px 10.2px; margin-bottom: 14.6px; }
.opt svg { width: 38px; height: 38px; margin: 16px 0 -16px; }
.opt span { display: block; font-size: 25.4px; line-height: 39.7px; margin: 12.5px 0 -12.5px 13.7px; }
.opt.wide span { margin-left: 17.7px; }
.opt.mid span { margin-left: 16px; }
.opt.ok { background: #5ef1c9; border-color: #05b893; color: #05b893; font-weight: 700; }
.opt.ok span { font-size: 25.1px; letter-spacing: -.15px; }
.fb { height: 53.3px; margin-top: -8.4px; border: 2px solid #0dba96; border-radius: 12px; background: #d3f1ea; color: #0dba96; text-align: center; font-size: 23.5px; font-weight: 700; line-height: 72px; letter-spacing: -.3px; }
.fb i { font-family: "DejaVu Sans", sans-serif; font-style: normal; font-weight: 700; margin-right: 7px; }

.result { margin-top: 6.4px; height: 490.9px; border: 5px solid #f5576c; border-radius: 24px; background: linear-gradient(135deg, #e7e4ff, #ffecd2); padding: 0 6px; }
.result h2 { display: flex; justify-content: center; gap: 18px; height: 83px; padding-top: 40px; font-size: 41.5px; font-weight: 400; line-height: 47px; color: #f5576c; letter-spacing: -.4px; }
.result h2 svg { width: 48px; height: 48px; }
.stats { display: grid; grid-template-columns: repeat(4, 1fr); gap: 18.5px; }
.stat { display: flex; flex-direction: column; align-items: center; height: 196.3px; border: 4px solid #667eea; border-radius: 17px; background: #fff; padding-top: 42px; }
.stat svg { width: 55px; height: 55px; }
.stat small { font-size: 19px; line-height: 26px; margin-top: 5px; color: #636e72; }
.stat b { font-size: 38.3px; line-height: 46px; margin-top: 19.5px; color: #f5576c; letter-spacing: -.4px; }
.message { margin-top: 24.3px; height: 171.3px; border: 4px solid #fdcb6e; border-radius: 17px; background: #fff; padding-top: 51px; }
.cup { width: 70px; height: 70px; margin: 0 auto; }
.message p { display: flex; justify-content: center; font-size: 28.1px; line-height: 38px; margin-top: 8px; color: #e17055; }
.message p svg { width: 32px; height: 32px; margin: 2px 0 0 8px; }
.message p span + svg { margin-left: 12px; }
```
